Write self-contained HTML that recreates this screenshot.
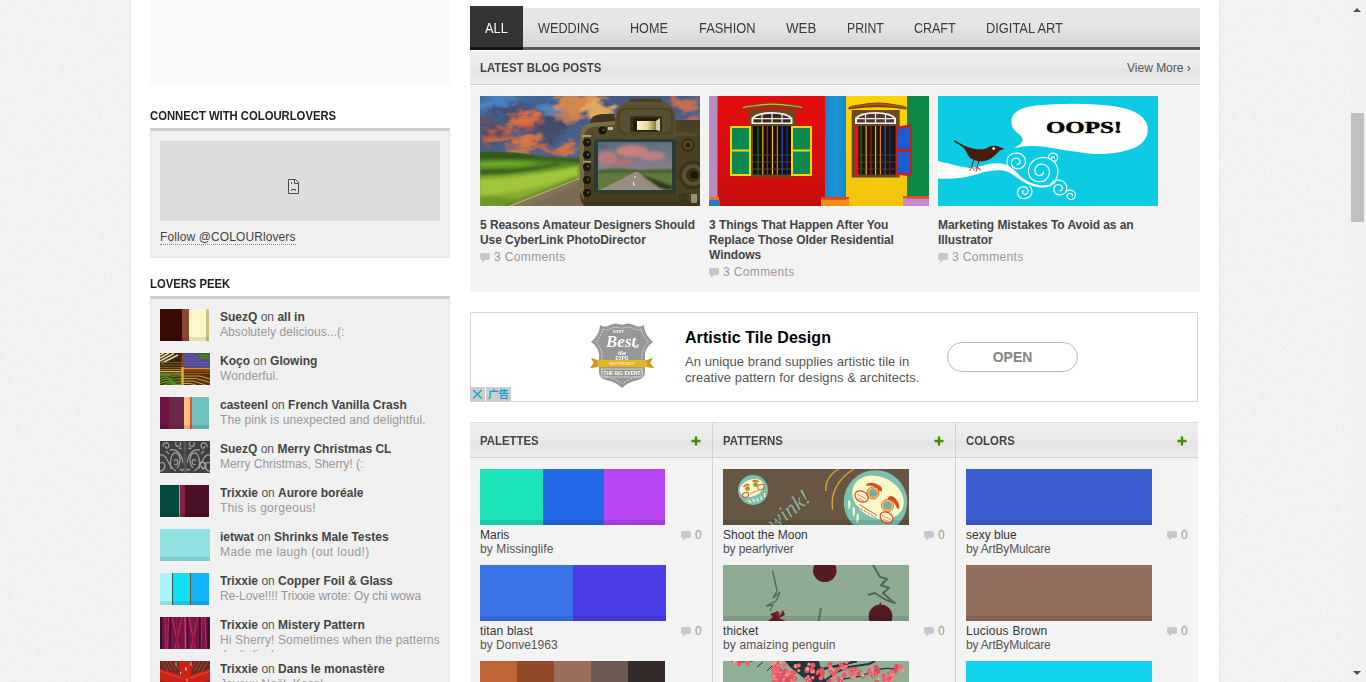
<!DOCTYPE html>
<html><head><meta charset="utf-8"><title>COLOURlovers</title>
<style>
*{box-sizing:border-box;margin:0;padding:0}
html,body{width:1366px;height:682px;overflow:hidden}
body{background:#eeeeee;font-family:"Liberation Sans","Noto Sans CJK SC",sans-serif;font-size:12px;color:#333;position:relative}
.abs{position:absolute}
#wrap{position:absolute;left:130px;top:0;width:1090px;height:682px;background:#fff;border-left:1px solid #ebebeb;border-right:1px solid #ebebeb}
h3{position:absolute;transform-origin:0 50%;transform:scaleX(.94);font-size:12px;font-weight:bold;color:#222;white-space:nowrap;line-height:14px}
.box{position:absolute;background:#f0f0f0;border:1px solid #e6e6e6;border-top:3px solid #cbcbcb}
/* tabs */
#tabs{position:absolute;left:470px;top:8px;width:730px;height:42px;background:linear-gradient(#e7e7e7,#e5e5e5 45%,#d5d5d5);border-bottom:3px solid #5a5a5a}
#tabs span{position:absolute;transform-origin:0 50%;top:0;height:39px;line-height:40px;font-size:14px;color:#3a3a3a;white-space:nowrap}
#taball span{display:inline-block;transform:scaleX(.91)}
#taball{position:absolute;left:470px;top:6px;width:53px;height:44px;background:#333;color:#fff;font-size:14px;line-height:44px;text-align:center;border-bottom:3px solid #141414}
.hd{position:absolute;height:34px;background:linear-gradient(#efefef,#e9e9e9 50%,#e3e3e3 55%,#ededed);border-bottom:1px solid #d4d4d4;font-weight:bold;font-size:12px;color:#444;line-height:35px;padding-left:10px}
.hd span{display:inline-block;transform-origin:0 50%;transform:scaleX(.95)}
.pt{position:absolute;letter-spacing:-.06px;font-weight:bold;font-size:12px;line-height:15px;color:#444;white-space:nowrap}
.cm{position:absolute;font-size:12px;color:#999;white-space:nowrap;line-height:14px}
.bub{position:absolute;width:10px;height:7px;background:#c8c8c8;border-radius:2px}
.bub:after{content:"";position:absolute;left:2px;top:6px;border-left:4px solid #c8c8c8;border-bottom:4px solid transparent}
.sw{position:absolute;height:56px;width:186px;overflow:hidden}
.sw i{position:absolute;top:0;height:56px;display:block}
.sw:after{content:"";position:absolute;left:0;right:0;bottom:0;height:5px;background:rgba(0,0,0,.1)}
.nm{position:absolute;font-size:12px;line-height:14px;color:#333;white-space:nowrap}
.by{position:absolute;font-size:12px;line-height:14px;color:#555;white-space:nowrap}
.lp{position:absolute;left:220px;font-size:12px;line-height:15px;white-space:nowrap;color:#999}
.lp b{color:#444}.lp em{font-style:normal;color:#555}
.th{position:absolute;left:160px;width:50px;height:32px;overflow:hidden}
.th i{position:absolute;top:0;height:32px;display:block}
.th[id]:after{display:none}
.th:after{content:"";position:absolute;left:0;right:0;bottom:0;height:4px;background:rgba(0,0,0,.1)}
.plus{position:absolute;color:#3a8a00;font-weight:bold;font-size:15px;line-height:15px}
</style></head><body>
<svg class="abs" style="left:0;top:0" width="1366" height="682"><defs><filter id="nz" x="0" y="0" width="100%" height="100%"><feTurbulence type="fractalNoise" baseFrequency="0.55" numOctaves="2" seed="3"/><feColorMatrix type="matrix" values="0 0 0 0 1  0 0 0 0 1  0 0 0 0 1  0.9 0 0 0 -0.25"/></filter></defs><rect width="1366" height="682" filter="url(#nz)"/></svg>
<div id="wrap"></div>

<!-- left column -->
<div class="abs" style="left:150px;top:0;width:300px;height:85px;background:#fafafa"></div>
<h3 style="left:150px;top:109px">CONNECT WITH COLOURLOVERS</h3>
<div class="box" style="left:150px;top:128px;width:300px;height:130px"></div>
<div class="abs" style="left:160px;top:141px;width:280px;height:80px;background:#ddd"></div>
<div class="abs" id="brk" style="left:287px;top:178px;width:14px;height:18px"><svg width="14" height="18" viewBox="0 0 14 18" style="display:block">
<path d="M1.5 1.5 H8.5 L11.5 4.5 V15.5 H1.5Z" fill="#e4e4e4" stroke="#4a4a4a" stroke-width="1"/>
<path d="M7.5 1.5 V5.5 H11.5" fill="none" stroke="#4a4a4a" stroke-width="1"/>
<path d="M4.5 4 V6" stroke="#555" stroke-width="1"/>
<path d="M4.2 12.6 Q6.5 10 9 12.6" fill="none" stroke="#444" stroke-width="1.1"/>
</svg></div><!--/brk-->
<div class="abs" style="left:160px;top:230px;font-size:12px;line-height:14px;letter-spacing:.1px;color:#444;border-bottom:1px dotted #888;white-space:nowrap">Follow @COLOURlovers</div>
<h3 style="left:150px;top:277px">LOVERS PEEK</h3>
<div class="box" style="left:150px;top:296px;width:300px;height:400px"></div>
<div id="peek">
<div class="th" style="top:309px;width:49px"><i style="left:0px;width:22px;background:#3a0c04"></i><i style="left:22px;width:7px;background:#8a4b32"></i><i style="left:29px;width:17px;background:#fff6cc"></i><i style="left:46px;width:3px;background:#d4c084"></i></div>
<div class="lp" style="top:310px;height:30px;overflow:hidden"><b>SuezQ</b> <em>on</em> <b>all in</b><br><span style="letter-spacing:0.07px">Absolutely delicious...(:</span></div>
<div class="th" id="p2" style="top:353px"><svg width="50" height="32" viewBox="0 0 50 32" style="display:block">
<defs><filter id="g05"><feGaussianBlur stdDeviation="0.45"/></filter><clipPath id="gc"><rect width="50" height="32"/></clipPath></defs>
<rect width="50" height="32" fill="#2a1a08"/>
<g filter="url(#g05)" clip-path="url(#gc)">
<rect x="0" y="0" width="23" height="16" fill="#3a2810"/>
<rect x="23" y="0" width="27" height="15" fill="#4e4a8a"/>
<rect x="0" y="16" width="23" height="16" fill="#4a3410"/>
<rect x="23" y="15" width="27" height="17" fill="#5a2c0c"/>
<path d="M36 0 H50 V8 Q42 6 36 0Z" fill="#3f6a2a"/>
<path d="M23 2 H36 M23 4.5 H38 M23 7 H42 M23 9.5 H50 M23 12 H50" stroke="#6a5ab0" stroke-width="1"/>
<path d="M38 2 Q44 2 50 4 M40 4.5 Q46 5 50 6.5" stroke="#5a8a38" stroke-width=".9" fill="none"/>
<path d="M0 2 L4 0 M0 5 L9 0 M0 8 L14 0.5 M2 10 L18 2" stroke="#e4d4a4" stroke-width="1.5"/>
<path d="M0 9.5 H22 M0 12 H22 M0 14.5 H22" stroke="#7a5c24" stroke-width="1"/>
<path d="M0 16.5 H22" stroke="#a8781a" stroke-width="1.2"/>
<path d="M0 18.6 H22" stroke="#e8c424" stroke-width="1.1"/>
<path d="M0 21 H22" stroke="#b89a50" stroke-width="1"/>
<path d="M0 23 Q4 21 8 22.5 T22 22.5 M0 25.5 Q5 22.5 9 25 T22 25 M0 28 Q6 24.5 11 27.5 T22 27.5 M0 30.5 Q7 27 13 30 T22 30 M4 32 Q9 29.5 15 32" stroke="#58a028" stroke-width="1.1" fill="none"/>
<path d="M23 15.6 H50" stroke="#e8921c" stroke-width="1.4"/>
<path d="M23 18 H50 M23 20.5 H50" stroke="#a05818" stroke-width="1"/>
<path d="M23 23 H40 L50 26 M23 25.5 H36 L50 29.5 M23 28 H33 L46 32 M23 30.5 H30 L36 32" stroke="#b8a840" stroke-width="1" fill="none"/>
<rect x="21.6" y="0" width="1.8" height="14" fill="#8a4a14"/>
<rect x="21.2" y="14" width="2.6" height="18" fill="#e0a828"/>
</g>
</svg></div><!--/p2-->
<div class="lp" style="top:354px;height:30px;overflow:hidden"><b>Koço</b> <em>on</em> <b>Glowing</b><br><span style="letter-spacing:0.08px">Wonderful.</span></div>
<div class="th" style="top:397px;width:49px"><i style="left:0px;width:9px;background:#6d1444"></i><i style="left:9px;width:15px;background:#6b2a4a"></i><i style="left:24px;width:6px;background:#f8c27c"></i><i style="left:30px;width:2px;background:#e0523c"></i><i style="left:32px;width:17px;background:#72c0c0"></i></div>
<div class="lp" style="top:398px;height:30px;overflow:hidden"><b>casteenl</b> <em>on</em> <b>French Vanilla Crash</b><br><span style="letter-spacing:0.11px">The pink is unexpected and delightful.</span></div>
<div class="th" id="p4" style="top:441px"><svg width="50" height="32" viewBox="0 0 50 32" style="display:block">
<defs><filter id="h05"><feGaussianBlur stdDeviation="0.5"/></filter><clipPath id="hc"><rect width="50" height="32"/></clipPath>
<g id="hh" fill="none" stroke="#9a9a9a" stroke-width="1.3">
<path d="M3 6 Q3 1 7.5 2 Q10 4 8 7 Q5.5 8 5.5 5"/>
<path d="M16 1 Q14.5 5 18.5 5.5 Q22 4 20 1"/>
<path d="M10 9 Q15 8 18 11 Q22 15 23 22"/>
<path d="M11 28 Q9 16 14 12 Q19 11 20 18 Q20 24 17 27"/>
<path d="M0 14 Q4 13 6 17 L10 24 Q12 28 16 30"/>
<path d="M0 22 Q4 20 5 25 Q4 30 0 30"/>
<path d="M14 20 Q17 17 18 21 Q17 25 14.5 23"/>
<path d="M19 8 Q20 6 21.5 8 M6 10 L9 13 M20 28 Q22 30 24 28"/>
<path d="M24.5 0 V32" stroke="#555" stroke-width="1.5"/>
</g></defs>
<rect width="50" height="32" fill="#404040"/>
<g filter="url(#h05)" clip-path="url(#hc)">
<use href="#hh"/><use href="#hh" transform="translate(50,0) scale(-1,1)"/>
<path d="M40 26 Q38 21 43 21 Q47 23 45 27 Q42 29 41.5 25" fill="none" stroke="#a4a4a4" stroke-width="1.6"/>
</g>
</svg></div><!--/p4-->
<div class="lp" style="top:442px;height:30px;overflow:hidden"><b>SuezQ</b> <em>on</em> <b>Merry Christmas CL</b><br><span style="letter-spacing:-0.03px">Merry Christmas, Sherry! (:</span></div>
<div class="th" style="top:485px;width:49px"><i style="left:0px;width:19px;background:#054a42"></i><i style="left:19px;width:1px;background:#b89aa0"></i><i style="left:20px;width:5px;background:#8a2048"></i><i style="left:25px;width:24px;background:#4a1028"></i></div>
<div class="lp" style="top:486px;height:30px;overflow:hidden"><b>Trixxie</b> <em>on</em> <b>Aurore boréale</b><br><span style="letter-spacing:0.27px">This is gorgeous!</span></div>
<div class="th" style="top:529px;width:50px"><i style="left:0px;width:50px;background:#92e1e2"></i></div>
<div class="lp" style="top:530px;height:30px;overflow:hidden"><b>ietwat</b> <em>on</em> <b>Shrinks Male Testes</b><br><span style="letter-spacing:0.38px">Made me laugh (out loud!)</span></div>
<div class="th" style="top:573px;width:49px"><i style="left:0px;width:12px;background:#a8f5fc"></i><i style="left:12px;width:1px;background:#2a5a5a"></i><i style="left:13px;width:17px;background:#12e0f5"></i><i style="left:30px;width:1px;background:#7a5a3a"></i><i style="left:31px;width:18px;background:#12b4fa"></i></div>
<div class="lp" style="top:574px;height:30px;overflow:hidden"><b>Trixxie</b> <em>on</em> <b>Copper Foil &amp; Glass</b><br><span style="letter-spacing:-0.08px">Re-Love!!!! Trixxie wrote: Oy chi wowa</span></div>
<div class="th" id="p8" style="top:617px"><svg width="50" height="32" viewBox="0 0 50 32" style="display:block">
<defs><filter id="i05"><feGaussianBlur stdDeviation="0.55"/></filter><clipPath id="ic"><rect width="50" height="32"/></clipPath></defs>
<rect width="50" height="32" fill="#761646"/>
<g filter="url(#i05)" clip-path="url(#ic)" fill="none" stroke-width="1.1">
<path d="M1 0 V32 M48.5 0 V32" stroke="#3c0a34" stroke-width="2.5"/>
<path d="M5 0 L6 32 M8.5 0 L7.5 32" stroke="#c42458"/>
<path d="M12 0 L19 32 M22 0 L15 32" stroke="#d02c5c"/>
<path d="M25 0 L25.5 32" stroke="#e03a60" stroke-width="1.3"/>
<path d="M29 0 L35 32 M38 0 L31 32" stroke="#cc2a5a"/>
<path d="M42 0 L41 32 M45 0 L46 32" stroke="#c42458"/>
<path d="M10.5 0 L10 32 M27.5 0 L28 32 M39.5 0 L40 32" stroke="#3a0a38" stroke-width="1.6"/>
<path d="M17 0 L17 32 M33.5 0 V32" stroke="#8a1848" stroke-width="1.5"/>
</g>
</svg></div><!--/p8-->
<div class="lp" style="top:618px;height:34px;overflow:hidden"><b>Trixxie</b> <em>on</em> <b>Mistery Pattern</b><br><span style="letter-spacing:0.12px">Hi Sherry! Sometimes when the patterns</span><br>don't display</div>
<div class="th" id="p9" style="top:661px"><svg width="50" height="32" viewBox="0 0 50 32" style="display:block">
<defs><filter id="j05"><feGaussianBlur stdDeviation="0.5"/></filter><clipPath id="jc"><rect width="50" height="32"/></clipPath></defs>
<rect width="50" height="32" fill="#6e2a20"/>
<g filter="url(#j05)" clip-path="url(#jc)">
<path d="M2 0 L8 10 M6 0 L12 10 M10 0 L16 10 M14 0 L19 9 M48 0 L42 10 M44 0 L38 10 M40 0 L34 10 M36 0 L31 9" stroke="#a04a3a" stroke-width=".9"/>
<path d="M19 0 H32 L31 14 L50 8 V20 L30 22 V32 H21 V22 L0 20 V8 L20 14Z" fill="#cc2418"/>
<path d="M0 22 L18 24 L6 32 H0Z M50 22 L32 24 L44 32 H50Z" fill="#5e1c14"/>
<path d="M0 10 L21 17 M50 10 L30 17" stroke="#e84030" stroke-width="1.3"/>
<ellipse cx="26" cy="8" rx=".9" ry="1.8" fill="#f0d0c8"/><ellipse cx="20.5" cy="12" rx=".7" ry="1.2" fill="#e8b0a0"/><ellipse cx="16" cy="3" rx=".6" ry="2" fill="#d8a8a0"/><ellipse cx="31" cy="3" rx=".6" ry="2" fill="#d8a8a0"/><ellipse cx="27" cy="19" rx=".7" ry="1.2" fill="#f0c0b0"/>
</g>
</svg></div><!--/p9-->
<div class="lp" style="top:662px;height:30px;overflow:hidden"><b>Trixxie</b> <em>on</em> <b>Dans le monastère</b><br>Joyeux Noël, Koço!</div>
</div>

<!-- right column -->
<div id="tabs">
<span style="left:68.0px;transform:scaleX(0.906)">WEDDING</span><span style="left:159.7px;transform:scaleX(0.900)">HOME</span><span style="left:228.8px;transform:scaleX(0.921)">FASHION</span><span style="left:315.7px;transform:scaleX(0.953)">WEB</span><span style="left:376.7px;transform:scaleX(0.876)">PRINT</span><span style="left:443.9px;transform:scaleX(0.891)">CRAFT</span><span style="left:515.5px;transform:scaleX(0.919)">DIGITAL ART</span>
</div>
<div id="taball"><span>ALL</span></div>

<div class="hd" style="left:470px;top:51px;width:730px"><span>LATEST BLOG POSTS</span></div>
<div class="abs" style="left:1127px;top:61px;font-size:12px;color:#555;white-space:nowrap">View More ›</div>
<div class="abs" style="left:470px;top:86px;width:730px;height:206px;background:#f3f3f3"></div>

<div class="abs" id="img1" style="left:480px;top:96px;width:220px;height:110px;background:#6a8a3a"><svg width="220" height="110" viewBox="0 0 220 110" style="display:block">
<defs>
<filter id="b3" x="-10%" y="-10%" width="120%" height="120%"><feGaussianBlur stdDeviation="2.2" result="g"/><feTurbulence type="fractalNoise" baseFrequency="0.06 0.11" numOctaves="3" seed="7" result="t"/><feDisplacementMap in="g" in2="t" scale="22" xChannelSelector="R" yChannelSelector="G"/><feGaussianBlur stdDeviation="0.7"/></filter>
<filter id="b2" x="-30%" y="-30%" width="160%" height="160%"><feGaussianBlur stdDeviation="1.8"/></filter>
<filter id="b1" x="-30%" y="-30%" width="160%" height="160%"><feGaussianBlur stdDeviation="0.8"/></filter>
<filter id="b05" x="-10%" y="-10%" width="120%" height="120%"><feGaussianBlur stdDeviation="0.45"/></filter>
<linearGradient id="sky" x1="0" y1="0" x2="1" y2="1"><stop offset="0" stop-color="#3d70ad"/><stop offset=".3" stop-color="#46587e"/><stop offset=".65" stop-color="#4a6590"/><stop offset="1" stop-color="#56749a"/></linearGradient>
<linearGradient id="grass" x1="0" y1="0" x2="0" y2="1"><stop offset="0" stop-color="#385a1c"/><stop offset=".25" stop-color="#5a8826"/><stop offset=".6" stop-color="#88b232"/><stop offset="1" stop-color="#86a632"/></linearGradient>
<linearGradient id="cam" x1="0" y1="0" x2="0" y2="1"><stop offset="0" stop-color="#5e5232"/><stop offset=".5" stop-color="#52472a"/><stop offset="1" stop-color="#443a20"/></linearGradient>
<linearGradient id="lcdsky" x1="0" y1="0" x2="0" y2="1"><stop offset="0" stop-color="#5e6c80"/><stop offset="1" stop-color="#8a8290"/></linearGradient>
<linearGradient id="glass" x1="0" y1="0" x2="1" y2="0"><stop offset="0" stop-color="#fbf6d4"/><stop offset=".55" stop-color="#e9d99a"/><stop offset="1" stop-color="#8d7a3c"/></linearGradient>
<clipPath id="c1"><rect width="220" height="110"/></clipPath>
<clipPath id="lcd"><rect x="118" y="46" width="74" height="48"/></clipPath>
</defs>
<g clip-path="url(#c1)">
<rect width="220" height="64" fill="url(#sky)"/>
<g filter="url(#b3)" opacity=".9">
<ellipse cx="20" cy="8" rx="22" ry="8" fill="#4f86c4"/>
<ellipse cx="70" cy="14" rx="12" ry="7" fill="#5a86bc"/>
<ellipse cx="45" cy="30" rx="30" ry="6" fill="#47507a"/>
<ellipse cx="85" cy="38" rx="18" ry="8" fill="#4a5f8a"/>
<ellipse cx="30" cy="14" rx="22" ry="5" fill="#454c6c"/><ellipse cx="70" cy="30" rx="22" ry="7" fill="#424a68"/><ellipse cx="14" cy="33" rx="14" ry="4" fill="#5a4658"/><ellipse cx="60" cy="42" rx="20" ry="4" fill="#4a4a66"/>
<ellipse cx="100" cy="8" rx="26" ry="10" fill="#e38c48"/>
<ellipse cx="118" cy="14" rx="16" ry="9" fill="#f0b25c"/>
<ellipse cx="88" cy="20" rx="12" ry="5" fill="#c9805a"/>
<ellipse cx="44" cy="25" rx="17" ry="9" fill="#b85a44"/><ellipse cx="44" cy="23" rx="14" ry="6.5" fill="#e8743c"/>
<ellipse cx="30" cy="30" rx="9" ry="4" fill="#d8683a"/>
<ellipse cx="20" cy="42" rx="17" ry="5.5" fill="#d2663c"/>
<ellipse cx="46" cy="46" rx="14" ry="5" fill="#ea7a3c"/>
<ellipse cx="38" cy="56" rx="16" ry="3.4" fill="#e8804a"/>
<ellipse cx="66" cy="53" rx="14" ry="4" fill="#d8683a"/>
<ellipse cx="86" cy="55" rx="12" ry="4.5" fill="#e6763a"/>
<ellipse cx="6" cy="24" rx="6" ry="5" fill="#6a4a5a"/>
<ellipse cx="205" cy="8" rx="14" ry="5" fill="#d8704a"/>
<ellipse cx="215" cy="24" rx="8" ry="3" fill="#e0704a"/>
<ellipse cx="200" cy="18" rx="10" ry="4" fill="#4a5a80"/>
</g>
<path d="M0 56 Q30 55 55 59 T100 62 L100 110 L0 110Z" fill="url(#grass)"/>
<g filter="url(#b2)">
<path d="M0 58 Q30 56 60 61 L100 63 L100 66 Q50 62 0 62Z" fill="#2f561a"/>
<path d="M0 73 Q30 74 62 70 Q72 68 78 66 L80 68 Q60 76 0 79Z" fill="#35601a"/>
<path d="M0 66 Q30 64 60 66 L40 70 0 71Z" fill="#6aa828"/>
<path d="M0 84 Q50 80 98 70 L98 80 Q50 95 0 100Z" fill="#a0c63a"/>
<path d="M0 100 Q20 100 40 104 L30 110 L0 110Z" fill="#6a9a26"/>
</g>
<path d="M28 110 L100 82 L104 82 L104 110Z" fill="#85745a"/>
<path d="M48 110 L104 86 L104 110Z" fill="#7a6a52" filter="url(#b1)"/>
<path d="M30 110 L99 82.5" stroke="#d8cdb0" stroke-width="1" filter="url(#b05)"/>
<path d="M24 110 L97 82" stroke="#5a7a22" stroke-width="1.6" filter="url(#b1)"/>
<!-- camera -->
<g filter="url(#b05)">
<path d="M110 27 Q110 19 122 18 L134 18 L136 26Z" fill="#3c341e"/>
<path d="M148 6 L150 2.5 L181 2.5 L183 6Z" fill="#4a4028"/>
<path d="M100 40 Q100 30 110 27 L135 25 Q137 8 146 6 L184 6 Q194 8 196 24 L220 24 L220 110 L104 110 Q100 106 100 96Z" fill="url(#cam)"/>
<path d="M100 40 Q100 30 110 27 L135 25 L135 29 L112 31 Q104 33 104 42 L104 104 L100 96Z" fill="#7a6c46"/>
<path d="M196 24 L220 24 L220 40 Q206 34 196 36Z" fill="#4a4026"/>
<rect x="137" y="12" width="57" height="27" rx="7" fill="#4e4428"/>
<rect x="140" y="14" width="51" height="22" rx="6" fill="#5a4f32"/>
<rect x="150" y="20" width="32" height="16" rx="2" fill="#3a3018"/>
<rect x="153" y="22" width="27" height="13" rx="1" fill="#221c0e"/>
<rect x="157" y="25" width="19" height="9" fill="url(#glass)"/>
<path d="M176 25 L180 22 L180 35 L176 34Z" fill="#d9cfa8"/>
<rect x="114" y="43" width="82" height="54" rx="3" fill="#2c3a38"/>
<rect x="196" y="40" width="24" height="70" fill="#4a4026"/>
</g>
<g clip-path="url(#lcd)">
<rect x="118" y="46" width="74" height="30" fill="url(#lcdsky)"/>
<g filter="url(#b2)">
<ellipse cx="152" cy="55" rx="16" ry="6" fill="#c8807a"/><ellipse cx="140" cy="66" rx="14" ry="4" fill="#a87478"/>
<ellipse cx="127" cy="62" rx="10" ry="7" fill="#b87a78"/>
<ellipse cx="172" cy="60" rx="13" ry="5" fill="#b88080"/>
<ellipse cx="185" cy="52" rx="7" ry="4" fill="#6a7488"/>
<ellipse cx="122" cy="50" rx="6" ry="3" fill="#566478"/>
</g>
<rect x="118" y="74" width="74" height="20" fill="#5f7a3c"/>
<path d="M118 74 Q140 71 160 74 L192 73 L192 77 L118 77Z" fill="#4a6430" filter="url(#b1)"/>
<path d="M120 94 L155 76 L158 76 L185 94Z" fill="#9a8c82"/>
<path d="M160 78 L192 90 L192 94 L180 92Z" fill="#2e3a22" filter="url(#b1)"/>
<path d="M153.5 86 L154 90 M155 80 L155.2 82" stroke="#fff" stroke-width="1"/>
</g>
<g filter="url(#b05)">
<g fill="#17130a"><circle cx="107" cy="46.5" r="4"/><circle cx="107" cy="59" r="4"/><circle cx="107" cy="71" r="4"/><circle cx="107" cy="84" r="4"/><circle cx="107" cy="97" r="4"/><circle cx="122.5" cy="34.5" r="4"/></g>
<g fill="#5a5038"><circle cx="108" cy="46" r="1.3"/><circle cx="108" cy="58.5" r="1.3"/><circle cx="108" cy="70.5" r="1.3"/><circle cx="108" cy="83.5" r="1.3"/><circle cx="108" cy="96.5" r="1.3"/><circle cx="123.5" cy="34" r="1.3"/></g>
<circle cx="208" cy="49" r="7" fill="#3a3018"/><circle cx="208" cy="49" r="4.6" fill="#5a4e2e"/><circle cx="208" cy="49" r="2.6" fill="#2a2210"/>
<circle cx="213" cy="79" r="14.5" fill="#3c321a"/><circle cx="213" cy="79" r="11" fill="#5c5030" /><circle cx="213" cy="79" r="7" fill="#3a3018"/><circle cx="214" cy="79" r="3.6" fill="#18140a"/>
<circle cx="203" cy="102" r="5" fill="#3e341c"/>
<rect x="104" y="105" width="116" height="5" fill="#3c321a"/>
<rect x="128" y="31" width="5" height="3" fill="#c8c0a0"/>
<rect x="102" y="39" width="9" height="2" fill="#a89c78"/>
<rect x="103" y="65" width="8" height="1.6" fill="#a89c78"/>
<rect x="211" y="98" width="6" height="9" fill="#b8b098" opacity=".7"/>
</g>
</g>
</svg></div><!--/img1-->
<div class="abs" id="img2" style="left:709px;top:96px;width:220px;height:110px;background:#d11"><svg width="220" height="110" viewBox="0 0 220 110" style="display:block">
<defs>
<filter id="s05" x="-5%" y="-5%" width="110%" height="110%"><feGaussianBlur stdDeviation="0.4"/></filter>
<linearGradient id="rw" x1="0" y1="0" x2="0" y2="1"><stop offset="0" stop-color="#e40c0a"/><stop offset=".6" stop-color="#da0b0a"/><stop offset="1" stop-color="#c40a0c"/></linearGradient>
<linearGradient id="yw" x1="0" y1="0" x2="0" y2="1"><stop offset="0" stop-color="#fbd406"/><stop offset="1" stop-color="#f2c408"/></linearGradient>
<linearGradient id="bp" x1="0" y1="0" x2="1" y2="0"><stop offset="0" stop-color="#1787c8"/><stop offset=".5" stop-color="#1d95d6"/><stop offset="1" stop-color="#168acb"/></linearGradient>
</defs>
<g filter="url(#s05)">
<rect width="220" height="110" fill="url(#rw)"/>
<rect x="0" y="0" width="8.5" height="110" fill="#b98cc2"/>
<rect x="0" y="101" width="10" height="3" fill="#e8781a"/><rect x="0" y="104" width="11" height="6" fill="#2a78c8"/>
<rect x="137" y="0" width="61" height="110" fill="url(#yw)"/>
<rect x="116" y="0" width="21" height="102" fill="url(#bp)"/>
<rect x="112" y="101" width="28" height="2.5" fill="#e8401a"/><rect x="112" y="103.5" width="28" height="6.5" fill="#f28c14"/>
<rect x="198" y="0" width="22" height="101" fill="#0b8849"/>
<rect x="194" y="100" width="26" height="2.5" fill="#e8501a"/><rect x="194" y="102.5" width="26" height="7.5" fill="#c48acc"/>
<!-- window 1 -->
<path d="M32 12 Q34 9 44 8.5 Q64 4.5 84 8.5 Q93 9 95 12 L94 13.5 Q64 9 33 13.5Z" fill="#6e4a20"/>
<path d="M34 11.5 Q40 10 46 9.8 Q64 6.5 82 9.8 Q88 10 93 11.5" stroke="#e8b820" stroke-width="1.1" fill="none"/>
<rect x="39.5" y="13.5" width="46.5" height="67.5" fill="#6b4a22"/>
<path d="M42.5 28 L42.5 22 Q48 16 63 16 Q78 16 83.5 22 L83.5 28Z" fill="#f4f0e8"/>
<path d="M44.5 26.5 L44.5 22.8 Q50 17.8 63 17.8 Q76 17.8 81.5 22.8 L81.5 26.5Z" fill="#3a2c22"/>
<path d="M53 17 V27.5 M63 16.5 V27.5 M73 17 V27.5 M43 22.6 H83" stroke="#f4f0e8" stroke-width="1.2"/>
<rect x="44" y="30" width="38.5" height="48.5" fill="#160e08"/>
<g stroke-width="1.1"><path d="M49 30V78.5" stroke="#0c7a40"/><path d="M53.8 30V78.5" stroke="#e8c818"/><path d="M58.3 30V78.5" stroke="#d81c14"/><path d="M63.5 30V78.5" stroke="#f0d020"/><path d="M68.3 30V78.5" stroke="#e8861a"/><path d="M73.2 30V78.5" stroke="#1f5fd0"/><path d="M78 30V78.5" stroke="#28308a"/></g>
<path d="M44 59H82.5 M44 66H82.5 M44 73H82.5" stroke="#7a5a30" stroke-width=".8" opacity=".8"/>
<rect x="21" y="30" width="21" height="50" fill="#f0d80a"/><rect x="23" y="32" width="17" height="21.5" fill="#0b8850"/><rect x="23" y="55.5" width="17" height="22.5" fill="#0b8850"/>
<rect x="82" y="30" width="21" height="50" fill="#f0d80a"/><rect x="84" y="32" width="17" height="21.5" fill="#0b8850"/><rect x="84" y="55.5" width="17" height="22.5" fill="#0b8850"/>
<!-- window 2 -->
<path d="M139 12 Q141 9 151 8.5 Q169 4.5 187 8.5 Q196 9 198 12 L197 13.5 Q169 9 140 13.5Z" fill="#6e4a20"/>
<path d="M141 11.5 Q147 10 153 9.8 Q169 6.5 185 9.8 Q191 10 196 11.5" stroke="#d84a1a" stroke-width="1.1" fill="none"/>
<rect x="142.7" y="14" width="48" height="67.5" fill="#6b4a22"/>
<path d="M146 28 L146 22 Q151 16 166.5 16 Q182 16 187 22 L187 28Z" fill="#f4f0e8"/>
<path d="M148 26.5 L148 22.8 Q153 17.8 166.5 17.8 Q180 17.8 185 22.8 L185 26.5Z" fill="#4a3c30"/>
<path d="M156.5 17 V27.5 M166.5 16.5 V27.5 M176.5 17 V27.5 M146.5 22.6 H186.5" stroke="#f4f0e8" stroke-width="1.2"/>
<rect x="146.7" y="30" width="40" height="48.5" fill="#1c120a"/>
<rect x="145.5" y="30" width="4" height="50" fill="#d41c18"/>
<g stroke-width="1.1"><path d="M152 30V78.5" stroke="#0c7a40"/><path d="M157.2 30V78.5" stroke="#e8c818"/><path d="M162 30V78.5" stroke="#d81c14"/><path d="M166.6 30V78.5" stroke="#f0d020"/><path d="M171.4 30V78.5" stroke="#e8861a"/><path d="M176.1 30V78.5" stroke="#1f5fd0"/><path d="M181 30V78.5" stroke="#28308a"/></g>
<path d="M150 59H186 M150 66H186 M150 73H186" stroke="#7a5a30" stroke-width=".8" opacity=".7"/>
<path d="M186.7 31 L203 28 L203 80.5 L186.7 78.5Z" fill="#cc1c1c"/>
<path d="M188.7 33 L201 30.6 L201 53 L188.7 53.4Z M188.7 56 L201 55.6 L201 78 L188.7 76.4Z" fill="#1c5ad2"/>
</g>
</svg></div><!--/img2-->
<div class="abs" id="img3" style="left:938px;top:96px;width:220px;height:110px;background:#11cde4"><svg width="220" height="110" viewBox="0 0 220 110" style="display:block">
<defs><filter id="t05" x="-5%" y="-5%" width="110%" height="110%"><feGaussianBlur stdDeviation="0.35"/></filter></defs>
<rect width="220" height="110" fill="#0ccbe3"/>
<g filter="url(#t05)">
<path d="M75.8 52 Q84 48 84.6 44 Q84.5 40 79 36.5 Q72 31 73.6 23 Q76 12 98 9.5 Q130 6.5 165 9 Q205 12 209.5 30 Q212 48 190 54 Q172 59.5 150 57.5 Q125 54 108 51 Q92 48.5 75.8 52Z" fill="#fff"/>
<path d="M0 65.3 Q10 67 20 70 Q32 73.5 45 69.5 Q55 66.5 64 67.5 Q72 69 80 78 Q90 88 103 89.5 Q112 90 117 85 L118 86.2 Q112 92 102 91.5 Q90 90.5 78 81 Q70 74.5 62 74.3 Q52 74 40 78 Q20 84 0 82.6Z" fill="#fff"/>
<g fill="none" stroke="#fff" stroke-width="1.15">
<path d="M80 78 Q72 76 69.5 69 Q67.5 60 75 57.5 Q84 55.5 87 62.5 Q89 70 82 72.5 Q75 74 73.5 68 Q73 62.5 78 62 Q82.5 62.5 82 66.5 Q81 69 78.5 68"/>
<path d="M117 85 Q122 77 118.5 69 Q114 61 104 61.5 Q93 62.5 90.5 73 Q89.5 83 98.5 85.5 Q108 87 111 79 Q113 71 106 68.5 Q99 67 97 73 Q96 78.5 101 79.5 Q105.5 79.5 105.5 75.5"/>
<path d="M112 64 Q109.5 61 111.5 58.5 Q114.5 56 118 58 Q121 61 118.5 64.5 Q115.5 66.5 113.5 64 Q112.8 61.5 115 60.8 Q117 61 116.5 62.8"/>
<path d="M92 90 Q96 96 92 100.5 Q87 104.5 82 101.5 Q78 98 80.5 93 Q84 89 88.5 91.5 Q91.5 94.5 89 97.5 Q86 99.5 84.5 96.5 Q84.5 94.5 86.5 94.5"/>
<path d="M112 90.5 Q113 84.5 119 84 Q126 84 128.5 89.5 Q130 96 124.5 98.5 Q118 100 116 95 Q115 90 119.5 88.5 Q124 88.5 124.5 92 Q124 95 121.5 94.5"/>
<path d="M127.5 96.5 Q128.5 94.2 132 94 Q136.5 94.5 137.5 98 Q137.5 102.5 133.5 103.5 Q129.5 103.5 129 100 Q129.5 97.2 132.5 97.2 Q135 98 134.2 100.2"/>
</g>
<path d="M16.1 43.9 Q18.5 45 21 46.8 Q25 49.5 29 50.8 Q34 52.8 38.7 53.2 Q44 53.6 48.4 52.4 Q51.5 49.8 55.6 49.7 Q59 49.6 61.3 50.8 L66.3 52.9 L61.3 54.8 Q59.5 57.5 56.5 59.7 Q53 63 48.4 64.5 Q44 65.8 40.3 65.3 Q35.5 64.5 32.3 62.1 Q29.5 59.5 28.2 55.6 Q26.5 52.5 24.2 50.8 Q21 48.5 17.7 46.8 Q16 45.5 16.1 43.9Z" fill="#4b1d0c"/>
<path d="M36 63 L33.5 71 M41 64.5 L39 71.5" stroke="#4b1d0c" stroke-width="1"/>
<path d="M31 72 L34 70.5 L36.5 74.5 M31.5 75 L34 71 M37 72.5 L39.5 71 L42.5 74 M38 75.5 L39.5 71.5" stroke="#b0665a" stroke-width="1.1" fill="none"/>
<circle cx="55.7" cy="52.6" r="1.4" fill="#fff"/>
</g>
<text x="108" y="36.8" font-family="'Liberation Serif',serif" font-weight="bold" font-size="17" textLength="76" lengthAdjust="spacingAndGlyphs" fill="#000" stroke="#000" stroke-width=".5">OOPS!</text>
</svg></div><!--/img3-->

<div class="pt" style="left:480px;top:218px">5 Reasons Amateur Designers Should<br>Use CyberLink PhotoDirector</div>
<div class="bub" style="left:480px;top:253px"></div><div class="cm" style="left:494px;top:250px;letter-spacing:.36px">3 Comments</div>
<div class="pt" style="left:709px;top:218px">3 Things That Happen After You<br>Replace Those Older Residential<br>Windows</div>
<div class="bub" style="left:709px;top:268px"></div><div class="cm" style="left:723px;top:265px;letter-spacing:.36px">3 Comments</div>
<div class="pt" style="left:938px;top:218px">Marketing Mistakes To Avoid as an<br>Illustrator</div>
<div class="bub" style="left:938px;top:253px"></div><div class="cm" style="left:952px;top:250px;letter-spacing:.36px">3 Comments</div>

<!-- ad -->
<div class="abs" style="left:470px;top:312px;width:728px;height:90px;border:1px solid #d6d6d6;background:#fff"></div>
<div class="abs" id="badge" style="left:588px;top:322px;width:68px;height:68px"><svg width="68" height="68" viewBox="0 0 68 68" style="display:block">
<defs><filter id="k05" x="-5%" y="-5%" width="110%" height="110%"><feGaussianBlur stdDeviation="0.35"/></filter></defs>
<g filter="url(#k05)">
<path d="M12 3 Q17 6 22 3 Q28 0 34 3 Q40 0 46 3 Q51 6 56 3 Q56 12 65 20 Q58 25 57 32 L57 50 Q57 56 50 58 Q40 60 34 66 Q28 60 18 58 Q11 56 11 50 L11 32 Q10 25 3 20 Q12 12 12 3Z" fill="#979797"/>
<path d="M15 7 Q19 9 23 6.5 Q28 4 34 6.5 Q40 4 45 6.5 Q49 9 53 7 Q54 13 60.5 20 Q55 25 54 32 L54 49 Q54 53.5 49 55 Q40 57 34 62 Q28 57 19 55 Q14 53.5 14 49 L14 32 Q13 25 7.5 20 Q14 13 15 7Z" fill="none" stroke="#e6e6e6" stroke-width=".8" stroke-dasharray="2.2 1.2"/>
<text x="18" y="25" font-family="'Liberation Serif',serif" font-style="italic" font-weight="bold" font-size="17" fill="#fff">Best</text>
<text x="46" y="26" font-family="'Liberation Sans',sans-serif" font-weight="bold" font-size="5" fill="#fff">of</text>
<text x="25" y="11" font-family="'Liberation Sans',sans-serif" font-weight="bold" font-size="3.6" fill="#fff">DON'T</text>
<text x="34" y="32.5" text-anchor="middle" font-family="'Liberation Sans',sans-serif" font-weight="bold" font-size="5.6" fill="#fff">tile</text>
<text x="34" y="37.5" text-anchor="middle" font-family="'Liberation Sans',sans-serif" font-weight="bold" font-size="4.6" fill="#fff">EXPO</text>
<path d="M3 36 L9 38 L59 38 L65 36 L62 41 L66 46 L59 45 L9 45 L2 46 L6 41Z" fill="#e6b422"/>
<path d="M3 36 L9 38 L9 45 L2 46 L6 41Z M65 36 L59 38 L59 45 L66 46 L62 41Z" fill="#c99a14"/>
<text x="34" y="43.4" text-anchor="middle" font-family="'Liberation Sans',sans-serif" font-weight="bold" font-size="3.6" fill="#f8e6a0" textLength="26">BEST PRODUCT</text>
<rect x="13.5" y="47" width="41" height="8" rx="2" fill="none" stroke="#e6e6e6" stroke-width=".7"/>
<text x="34" y="53.4" text-anchor="middle" font-family="'Liberation Sans',sans-serif" font-weight="bold" font-size="5.4" fill="#fff" textLength="37" lengthAdjust="spacingAndGlyphs">THE BIG EVENT</text>
</g>
</svg></div><!--/badge-->
<div class="abs" style="left:685px;top:328px;font-size:16px;font-weight:bold;color:#000;white-space:nowrap;line-height:20px;letter-spacing:.07px">Artistic Tile Design</div>
<div class="abs" style="left:685px;top:354px;font-size:13px;color:#555;white-space:nowrap;line-height:16.2px;letter-spacing:.06px">An unique brand supplies artistic tile in<br>creative pattern for designs &amp; architects.</div>
<div class="abs" style="left:947px;top:342px;width:131px;height:30px;border:1px solid #bbb;border-radius:15px;text-align:center;line-height:28px;font-size:14px;font-weight:bold;color:#858585">OPEN</div>
<div class="abs" style="left:470px;top:387px;width:15px;height:15px;background:#cdcdcd"><svg width="15" height="15" viewBox="0 0 15 15" style="display:block"><path d="M3.2 3 L11.6 11.6 M11.6 3 L3.2 11.6" stroke="#1aa3c2" stroke-width="1.5" fill="none"/></svg></div>
<div class="abs" style="left:486px;top:387px;width:25px;height:15px;background:#cdcdcd;color:#1aa3c2;font-size:10.5px;line-height:14px;font-weight:bold;text-align:center;white-space:nowrap">广告</div>

<!-- panels -->
<div class="abs" style="left:470px;top:422px;width:728px;height:270px;background:#f3f3f3;border-top:1px solid #ddd"></div>
<div class="hd" style="left:470px;top:423px;width:728px;height:35px"></div>
<div class="abs" style="left:712px;top:423px;width:1px;height:270px;background:#d0d0d0"></div>
<div class="abs" style="left:955px;top:423px;width:1px;height:270px;background:#d0d0d0"></div>
<div class="hd" style="left:470px;top:424px;width:242px;background:none;border:none"><span>PALETTES</span></div>
<div class="hd" style="left:713px;top:424px;width:242px;background:none;border:none"><span>PATTERNS</span></div>
<div class="hd" style="left:956px;top:424px;width:242px;background:none;border:none"><span>COLORS</span></div>
<svg class="abs" style="left:691px;top:436px" width="10" height="10" viewBox="0 0 10 10"><path d="M5 .5V9.5M.5 5H9.5" stroke="#3f8f00" stroke-width="2.4"/></svg><svg class="abs" style="left:934px;top:436px" width="10" height="10" viewBox="0 0 10 10"><path d="M5 .5V9.5M.5 5H9.5" stroke="#3f8f00" stroke-width="2.4"/></svg><svg class="abs" style="left:1177px;top:436px" width="10" height="10" viewBox="0 0 10 10"><path d="M5 .5V9.5M.5 5H9.5" stroke="#3f8f00" stroke-width="2.4"/></svg>

<div id="cols">
<div class="sw" style="left:480px;top:469px;width:185px"><i style="left:0px;width:63px;background:#1de4b8"></i><i style="left:63px;width:61px;background:#2369e8"></i><i style="left:124px;width:61px;background:#b846f2"></i></div>
<div class="nm" style="left:480px;top:528px">Maris</div><div class="by" style="left:480px;top:542px;letter-spacing:0.10px">by Missinglife</div>
<div class="bub" style="left:681px;top:531px"></div><div class="cm" style="left:695px;top:528px">0</div>
<div class="sw" style="left:480px;top:565px;width:186px"><i style="left:0px;width:93px;background:#3b73e8"></i><i style="left:93px;width:93px;background:#4a3fe6"></i></div>
<div class="nm" style="left:480px;top:624px;letter-spacing:0.15px">titan blast</div><div class="by" style="left:480px;top:638px;letter-spacing:0.02px">by Donve1963</div>
<div class="bub" style="left:681px;top:627px"></div><div class="cm" style="left:695px;top:624px">0</div>
<div class="sw" style="left:480px;top:661px;width:185px"><i style="left:0px;width:37px;background:#c26536"></i><i style="left:37px;width:37px;background:#914826"></i><i style="left:74px;width:37px;background:#9a705c"></i><i style="left:111px;width:37px;background:#6d5b52"></i><i style="left:148px;width:37px;background:#342c2b"></i></div>
<div class="sw" id="pt1" style="left:723px;top:469px;background:#675845"><svg width="186" height="56" viewBox="0 0 186 56" style="display:block">
<defs><filter id="p05" x="-5%" y="-5%" width="110%" height="110%"><feGaussianBlur stdDeviation="0.35"/></filter></defs>
<rect width="186" height="56" fill="#665643"/>
<g filter="url(#p05)">
<path d="M115.7 0 Q102 8 102.8 22" stroke="#d8a62e" stroke-width="1.4" fill="none"/>
<path d="M130.7 0 Q106 16 109.6 40.6" stroke="#d8a62e" stroke-width="1.4" fill="none"/>
<text transform="translate(51,62) rotate(-39)" font-family="'Liberation Serif',serif" font-style="italic" font-size="22" fill="#86b29c">wink!</text>
<circle cx="30" cy="21" r="15" fill="#7cc0b0"/>
<ellipse cx="28.6" cy="19" rx="12.5" ry="8.5" transform="rotate(-20 28.6 19)" fill="#fcf8c8"/>
<ellipse cx="22.5" cy="26" rx="3.2" ry="2.4" transform="rotate(-20 22.5 26)" fill="none" stroke="#d85a30" stroke-width="1"/>
<ellipse cx="38" cy="18" rx="3.4" ry="2.6" transform="rotate(-20 38 18)" fill="none" stroke="#d85a30" stroke-width="1"/>
<circle cx="24.5" cy="19.5" r="2.2" fill="#6aa850" stroke="#e8a030" stroke-width=".9"/>
<circle cx="32.5" cy="15.5" r="2.2" fill="#6aa850" stroke="#e8a030" stroke-width=".9"/>
<path d="M20.5 18 Q23 14.5 26 16 M29.5 12.5 Q32.5 10.5 35.5 13" stroke="#d85a30" stroke-width="1.5" fill="none"/>
<path d="M27 24.5 L36 21.5" stroke="#d85a30" stroke-width=".7"/>
<path d="M25 31 L28 33.5 M29.5 30 L32 33 M34 29 L35 32.5 M38 27.5 L38.5 31 M41.5 24 L41.5 28" stroke="#fcf8c8" stroke-width="1.3"/>
<circle cx="152.5" cy="33" r="31.8" fill="#7cc0b0"/>
<ellipse cx="155" cy="28.5" rx="27" ry="20.5" transform="rotate(27 155 28.5)" fill="#fcf8c8"/>
<ellipse cx="138.5" cy="27.5" rx="7" ry="5.2" transform="rotate(30 138.5 27.5)" fill="#fdf3c8" stroke="#d84a28" stroke-width="1.2"/>
<ellipse cx="163.5" cy="48.5" rx="6.8" ry="5.2" transform="rotate(30 163.5 48.5)" fill="#fdf3c8" stroke="#d84a28" stroke-width="1.2"/>
<path d="M134 25 L143 30 M135 29 L141 32" stroke="#d84a28" stroke-width=".6"/>
<path d="M159 46 L168 51 M160 50 L166 53" stroke="#d84a28" stroke-width=".6"/>
<circle cx="150" cy="24" r="4.3" fill="#6ab0b8" stroke="#e8a828" stroke-width="1.6"/><circle cx="150" cy="24" r="6" fill="none" stroke="#d84a28" stroke-width=".9"/>
<circle cx="164.5" cy="36.5" r="4.3" fill="#6ab0b8" stroke="#e8a828" stroke-width="1.6"/><circle cx="164.5" cy="36.5" r="6" fill="none" stroke="#d84a28" stroke-width=".9"/>
<path d="M143.5 15 Q149 12 155 16 Q159.5 17 159 22 Q156 23 154.5 19.5 Q149 15.5 143.5 17Z" fill="#d84a28"/>
<path d="M165 28.5 Q168 25.5 172 29 Q176 33 176.5 39 Q174 41 173 37 Q170 31 165 30.5Z" fill="#d84a28"/>
<path d="M136.5 35.5 L154 46.5" stroke="#4a3a2a" stroke-width=".7"/>
<path d="M134 37 L136 39.5 M137.5 39 L139.5 41.5 M141 41 L143 43.5 M144.5 43 L146.5 45.5 M148 45 L150 47.5 M151 47 L153 49.5" stroke="#d84a28" stroke-width=".8"/>
<path d="M125 33 Q127 28 127.5 35 Q127 42 125.5 40Z M129.5 39.5 Q131.5 35 132 42 Q131.5 49 130 47Z M133.5 46 Q136 42 136 49 Q135 55 133.5 53Z" fill="#fcf8c8"/>
</g>
</svg></div><!--/pt1-->
<div class="nm" style="left:723px;top:528px">Shoot the Moon</div><div class="by" style="left:723px;top:542px;letter-spacing:-0.09px">by pearlyriver</div>
<div class="bub" style="left:924px;top:531px"></div><div class="cm" style="left:938px;top:528px">0</div>
<div class="sw" id="pt2" style="left:723px;top:565px;background:#8fab92"><svg width="186" height="56" viewBox="0 0 186 56" style="display:block">
<defs><filter id="q05" x="-5%" y="-5%" width="110%" height="110%"><feGaussianBlur stdDeviation="0.35"/></filter></defs>
<rect width="186" height="56" fill="#8fab92"/>
<g filter="url(#q05)">
<circle cx="101.8" cy="5.3" r="11.8" fill="#571a20"/>
<circle cx="157.5" cy="51.4" r="11.9" fill="#571a20"/>
<path d="M157 40 L157.5 37.5" stroke="#571a20" stroke-width="1.2"/>
<path d="M49.5 6 Q52 16 54 26 L50 33 L57 27 L53 36 L43 41 L50 40 L47 46" stroke="#4a6a58" stroke-width="1.3" fill="none"/>
<path d="M150 0 L157 12 L164 14 L158 20 L166 23 L160 28 L169 36 L172 38 L163 35 L152 28 L145 30" stroke="#4a6a58" stroke-width="2" fill="none" stroke-linejoin="round"/>
<path d="M98 43 L95.5 56" stroke="#5a7a62" stroke-width="2.2"/>
<path d="M47 49 L55 46 L57 51 L60 45 L62 50 L56 53 L63 56 L45 56 L50 52Z" fill="#6a1c28"/>
<path d="M52 47 L57 52 M58 46 L55 53" stroke="#a83048" stroke-width=".7"/>
</g>
</svg></div><!--/pt2-->
<div class="nm" style="left:723px;top:624px;letter-spacing:0.10px">thicket</div><div class="by" style="left:723px;top:638px;letter-spacing:0.13px">by amaizing penguin</div>
<div class="bub" style="left:924px;top:627px"></div><div class="cm" style="left:938px;top:624px">0</div>
<div class="sw" id="pt3" style="left:723px;top:661px;background:#8fb095"><svg width="186" height="56" viewBox="0 0 186 56" style="display:block">
<defs><filter id="r05" x="-5%" y="-5%" width="110%" height="110%"><feGaussianBlur stdDeviation="0.3"/></filter></defs>
<rect width="186" height="56" fill="#8fb095"/>
<g filter="url(#r05)">
<path d="M62 0 Q66 6 72 10 Q80 16 86 22 L104 22 Q98 12 96 0Z" fill="#22343a"/>
<path d="M86 0 Q92 6 100 8 L118 4 L134 0" stroke="#22343a" stroke-width="2.5" fill="none"/>
<path d="M100 22 Q112 10 126 6 L146 3 L152 0" stroke="#22343a" stroke-width="2.2" fill="none"/>
<path d="M120 18 Q140 16 150 10 Q160 6 172 8" stroke="#22343a" stroke-width="1.3" fill="none"/>
<path d="M8 0 Q20 2 30 0 M34 6 L40 1 M44 10 L50 4" stroke="#22343a" stroke-width="1" fill="none"/>
<circle cx="52.8" cy="5.9" r="2.0" fill="#ee5a6a"/>
<circle cx="52.8" cy="5.9" r="0.6" fill="#fde0c0"/>
<circle cx="50.2" cy="13.9" r="1.9" fill="#e8485e"/>
<circle cx="50.2" cy="13.9" r="0.6" fill="#fde0c0"/>
<circle cx="56.4" cy="9.0" r="1.8" fill="#e8485e"/>
<circle cx="56.4" cy="9.0" r="0.6" fill="#fde0c0"/>
<circle cx="61.3" cy="4.5" r="2.2" fill="#f0707a"/>
<circle cx="52.3" cy="9.6" r="2.2" fill="#f0707a"/>
<circle cx="52.3" cy="9.6" r="0.6" fill="#fde0c0"/>
<circle cx="57.3" cy="16.1" r="2.1" fill="#ee5a6a"/>
<circle cx="57.3" cy="16.1" r="0.6" fill="#fde0c0"/>
<circle cx="53.4" cy="21.0" r="2.4" fill="#f28a88"/>
<circle cx="50.1" cy="9.3" r="2.3" fill="#f0707a"/>
<circle cx="56.1" cy="11.5" r="2.2" fill="#e8505e"/>
<circle cx="56.1" cy="11.5" r="0.6" fill="#fde0c0"/>
<circle cx="52.8" cy="8.7" r="2.4" fill="#e8485e"/>
<circle cx="52.8" cy="8.7" r="0.6" fill="#fde0c0"/>
<circle cx="57.5" cy="9.0" r="2.1" fill="#e8505e"/>
<circle cx="51.7" cy="16.1" r="1.7" fill="#ee5a6a"/>
<circle cx="55.3" cy="7.3" r="2.0" fill="#f28a88"/>
<circle cx="55.3" cy="7.3" r="0.6" fill="#fde0c0"/>
<circle cx="56.7" cy="20.3" r="1.7" fill="#e8485e"/>
<circle cx="53.3" cy="14.5" r="2.5" fill="#e8485e"/>
<circle cx="53.3" cy="14.5" r="0.6" fill="#fde0c0"/>
<circle cx="52.1" cy="12.3" r="1.6" fill="#e8485e"/>
<circle cx="61.5" cy="17.2" r="2.6" fill="#e8485e"/>
<circle cx="61.5" cy="17.2" r="0.6" fill="#fde0c0"/>
<circle cx="53.9" cy="6.8" r="2.3" fill="#f28a88"/>
<circle cx="50.9" cy="15.1" r="2.5" fill="#f0707a"/>
<circle cx="50.9" cy="15.1" r="0.6" fill="#fde0c0"/>
<circle cx="54.6" cy="21.3" r="1.9" fill="#e8485e"/>
<circle cx="54.6" cy="21.3" r="0.6" fill="#fde0c0"/>
<circle cx="55.5" cy="10.6" r="2.4" fill="#f0707a"/>
<circle cx="55.3" cy="7.7" r="2.5" fill="#e8485e"/>
<circle cx="55.3" cy="7.7" r="0.6" fill="#fde0c0"/>
<circle cx="50.7" cy="7.0" r="2.3" fill="#ee5a6a"/>
<circle cx="56.6" cy="14.5" r="1.9" fill="#e8485e"/>
<circle cx="56.6" cy="14.5" r="0.6" fill="#fde0c0"/>
<circle cx="56.4" cy="17.9" r="2.0" fill="#ee5a6a"/>
<circle cx="56.4" cy="17.9" r="0.6" fill="#fde0c0"/>
<circle cx="52.9" cy="11.4" r="1.6" fill="#e8505e"/>
<circle cx="52.9" cy="11.4" r="0.6" fill="#fde0c0"/>
<circle cx="57.8" cy="11.7" r="1.8" fill="#ee5a6a"/>
<circle cx="57.8" cy="11.7" r="0.6" fill="#fde0c0"/>
<circle cx="53.1" cy="8.4" r="1.8" fill="#ee5a6a"/>
<circle cx="53.1" cy="8.4" r="0.6" fill="#fde0c0"/>
<circle cx="53.1" cy="9.9" r="2.5" fill="#f0707a"/>
<circle cx="61.9" cy="11.3" r="2.5" fill="#e8485e"/>
<circle cx="61.9" cy="11.3" r="0.6" fill="#fde0c0"/>
<circle cx="51.1" cy="7.8" r="2.5" fill="#ee5a6a"/>
<circle cx="51.1" cy="7.8" r="0.6" fill="#fde0c0"/>
<circle cx="57.9" cy="18.4" r="2.2" fill="#e8505e"/>
<circle cx="57.9" cy="16.3" r="1.9" fill="#e8505e"/>
<circle cx="50.9" cy="21.5" r="2.6" fill="#ee5a6a"/>
<circle cx="50.9" cy="21.5" r="0.6" fill="#fde0c0"/>
<circle cx="70.8" cy="11.5" r="2.6" fill="#e8485e"/>
<circle cx="68.3" cy="15.6" r="2.1" fill="#e8505e"/>
<circle cx="62.6" cy="10.0" r="2.5" fill="#e8485e"/>
<circle cx="63.1" cy="14.7" r="2.4" fill="#e8505e"/>
<circle cx="66.6" cy="20.5" r="1.8" fill="#f28a88"/>
<circle cx="66.6" cy="20.5" r="0.6" fill="#fde0c0"/>
<circle cx="70.7" cy="19.3" r="2.1" fill="#f28a88"/>
<circle cx="70.7" cy="19.3" r="0.6" fill="#fde0c0"/>
<circle cx="60.9" cy="18.3" r="1.7" fill="#f28a88"/>
<circle cx="67.3" cy="11.7" r="2.0" fill="#f28a88"/>
<circle cx="63.6" cy="14.2" r="1.7" fill="#f28a88"/>
<circle cx="63.6" cy="14.2" r="0.6" fill="#fde0c0"/>
<circle cx="62.5" cy="21.7" r="2.0" fill="#e8505e"/>
<circle cx="64.8" cy="10.9" r="2.5" fill="#f0707a"/>
<circle cx="65.2" cy="20.3" r="2.4" fill="#e8485e"/>
<circle cx="71.3" cy="17.6" r="2.5" fill="#e8505e"/>
<circle cx="71.3" cy="17.6" r="0.6" fill="#fde0c0"/>
<circle cx="69.6" cy="12.0" r="2.5" fill="#ee5a6a"/>
<circle cx="63.9" cy="20.3" r="1.9" fill="#e8485e"/>
<circle cx="60.1" cy="13.7" r="2.1" fill="#e8505e"/>
<circle cx="67.2" cy="16.3" r="2.1" fill="#e8505e"/>
<circle cx="64.3" cy="19.2" r="2.6" fill="#e8485e"/>
<circle cx="17.0" cy="1.3" r="1.9" fill="#e8505e"/>
<circle cx="16.1" cy="3.7" r="1.6" fill="#e8505e"/>
<circle cx="13.2" cy="0.6" r="1.8" fill="#f0707a"/>
<circle cx="10.8" cy="1.7" r="1.7" fill="#f28a88"/>
<circle cx="10.8" cy="1.7" r="0.6" fill="#fde0c0"/>
<circle cx="23.7" cy="1.5" r="1.7" fill="#f0707a"/>
<circle cx="23.3" cy="0.3" r="1.7" fill="#ee5a6a"/>
<circle cx="23.3" cy="0.3" r="0.6" fill="#fde0c0"/>
<circle cx="11.6" cy="0.7" r="1.9" fill="#f28a88"/>
<circle cx="11.6" cy="0.7" r="0.6" fill="#fde0c0"/>
<circle cx="24.8" cy="3.3" r="1.8" fill="#e8485e"/>
<circle cx="24.8" cy="3.3" r="0.6" fill="#fde0c0"/>
<circle cx="16.4" cy="2.0" r="1.7" fill="#e8485e"/>
<circle cx="25.3" cy="0.5" r="1.7" fill="#ee5a6a"/>
<circle cx="56.3" cy="1.5" r="2.5" fill="#e8505e"/>
<circle cx="50.4" cy="2.4" r="1.8" fill="#f0707a"/>
<circle cx="50.4" cy="2.4" r="0.6" fill="#fde0c0"/>
<circle cx="51.3" cy="3.1" r="2.6" fill="#e8505e"/>
<circle cx="57.7" cy="1.6" r="2.0" fill="#f28a88"/>
<circle cx="57.7" cy="1.6" r="0.6" fill="#fde0c0"/>
<circle cx="49.8" cy="2.7" r="2.3" fill="#f28a88"/>
<circle cx="52.0" cy="1.9" r="1.6" fill="#f28a88"/>
<circle cx="52.0" cy="1.9" r="0.6" fill="#fde0c0"/>
<circle cx="89.5" cy="9.9" r="2.5" fill="#f28a88"/>
<circle cx="88.4" cy="8.0" r="2.1" fill="#e8505e"/>
<circle cx="86.0" cy="3.2" r="1.8" fill="#f0707a"/>
<circle cx="86.0" cy="3.2" r="0.6" fill="#fde0c0"/>
<circle cx="72.8" cy="5.2" r="2.2" fill="#f28a88"/>
<circle cx="89.3" cy="4.1" r="2.1" fill="#ee5a6a"/>
<circle cx="75.7" cy="9.6" r="1.7" fill="#f0707a"/>
<circle cx="75.7" cy="9.6" r="0.6" fill="#fde0c0"/>
<circle cx="89.9" cy="4.3" r="2.5" fill="#ee5a6a"/>
<circle cx="83.8" cy="9.6" r="2.5" fill="#e8485e"/>
<circle cx="84.5" cy="7.8" r="2.2" fill="#f28a88"/>
<circle cx="84.5" cy="7.8" r="0.6" fill="#fde0c0"/>
<circle cx="75.9" cy="4.4" r="2.1" fill="#e8505e"/>
<circle cx="75.9" cy="4.4" r="0.6" fill="#fde0c0"/>
<circle cx="99.1" cy="9.1" r="2.0" fill="#f0707a"/>
<circle cx="95.3" cy="10.6" r="2.0" fill="#e8485e"/>
<circle cx="95.3" cy="10.6" r="0.6" fill="#fde0c0"/>
<circle cx="97.7" cy="9.6" r="2.4" fill="#e8485e"/>
<circle cx="97.7" cy="9.6" r="0.6" fill="#fde0c0"/>
<circle cx="98.9" cy="15.9" r="1.8" fill="#f28a88"/>
<circle cx="98.9" cy="15.9" r="0.6" fill="#fde0c0"/>
<circle cx="99.4" cy="12.4" r="2.5" fill="#e8505e"/>
<circle cx="97.9" cy="17.1" r="2.5" fill="#e8505e"/>
<circle cx="97.9" cy="17.1" r="0.6" fill="#fde0c0"/>
<circle cx="94.2" cy="12.4" r="1.8" fill="#e8505e"/>
<circle cx="99.4" cy="9.7" r="2.2" fill="#e8505e"/>
<circle cx="106.7" cy="5.4" r="1.9" fill="#f28a88"/>
<circle cx="106.7" cy="5.4" r="0.6" fill="#fde0c0"/>
<circle cx="122.1" cy="5.4" r="1.9" fill="#e8485e"/>
<circle cx="122.1" cy="7.2" r="2.3" fill="#e8485e"/>
<circle cx="115.5" cy="7.9" r="2.0" fill="#e8485e"/>
<circle cx="115.5" cy="7.9" r="0.6" fill="#fde0c0"/>
<circle cx="106.8" cy="4.6" r="2.4" fill="#ee5a6a"/>
<circle cx="106.8" cy="4.6" r="0.6" fill="#fde0c0"/>
<circle cx="118.2" cy="3.4" r="2.2" fill="#ee5a6a"/>
<circle cx="108.1" cy="7.8" r="2.4" fill="#f28a88"/>
<circle cx="107.3" cy="2.6" r="1.9" fill="#e8485e"/>
<circle cx="123.5" cy="1.1" r="2.3" fill="#ee5a6a"/>
<circle cx="123.5" cy="1.1" r="0.6" fill="#fde0c0"/>
<circle cx="122.0" cy="6.2" r="2.4" fill="#f0707a"/>
<circle cx="117.4" cy="3.8" r="1.8" fill="#e8505e"/>
<circle cx="119.6" cy="7.0" r="1.9" fill="#f0707a"/>
<circle cx="118.7" cy="4.1" r="1.8" fill="#e8485e"/>
<circle cx="118.7" cy="4.1" r="0.6" fill="#fde0c0"/>
<circle cx="113.9" cy="7.8" r="1.9" fill="#e8505e"/>
<circle cx="120.7" cy="14.9" r="2.4" fill="#ee5a6a"/>
<circle cx="120.7" cy="14.9" r="0.6" fill="#fde0c0"/>
<circle cx="113.2" cy="10.4" r="1.9" fill="#f0707a"/>
<circle cx="115.5" cy="17.4" r="1.9" fill="#ee5a6a"/>
<circle cx="116.6" cy="21.2" r="1.9" fill="#ee5a6a"/>
<circle cx="113.0" cy="11.4" r="1.9" fill="#e8505e"/>
<circle cx="107.7" cy="11.1" r="2.1" fill="#e8485e"/>
<circle cx="107.7" cy="11.1" r="0.6" fill="#fde0c0"/>
<circle cx="121.5" cy="13.6" r="2.2" fill="#ee5a6a"/>
<circle cx="105.4" cy="20.2" r="1.8" fill="#e8485e"/>
<circle cx="118.4" cy="18.1" r="1.9" fill="#f28a88"/>
<circle cx="118.4" cy="18.1" r="0.6" fill="#fde0c0"/>
<circle cx="109.9" cy="21.8" r="2.2" fill="#f0707a"/>
<circle cx="106.9" cy="19.1" r="1.6" fill="#e8485e"/>
<circle cx="116.3" cy="21.7" r="1.7" fill="#f0707a"/>
<circle cx="116.0" cy="20.1" r="1.7" fill="#ee5a6a"/>
<circle cx="111.1" cy="17.2" r="2.1" fill="#f0707a"/>
<circle cx="111.1" cy="17.2" r="0.6" fill="#fde0c0"/>
<circle cx="117.4" cy="20.1" r="2.4" fill="#e8485e"/>
<circle cx="117.4" cy="20.1" r="0.6" fill="#fde0c0"/>
<circle cx="110.4" cy="13.6" r="2.0" fill="#ee5a6a"/>
<circle cx="135.5" cy="12.6" r="2.1" fill="#e8485e"/>
<circle cx="128.7" cy="12.2" r="2.6" fill="#ee5a6a"/>
<circle cx="128.7" cy="12.2" r="0.6" fill="#fde0c0"/>
<circle cx="127.6" cy="11.6" r="2.3" fill="#f0707a"/>
<circle cx="133.0" cy="8.5" r="1.9" fill="#e8505e"/>
<circle cx="133.0" cy="8.5" r="0.6" fill="#fde0c0"/>
<circle cx="139.9" cy="15.4" r="2.0" fill="#e8485e"/>
<circle cx="139.9" cy="15.4" r="0.6" fill="#fde0c0"/>
<circle cx="127.9" cy="8.4" r="2.4" fill="#e8505e"/>
<circle cx="127.9" cy="8.4" r="0.6" fill="#fde0c0"/>
<circle cx="130.6" cy="15.2" r="1.7" fill="#e8485e"/>
<circle cx="130.6" cy="15.2" r="0.6" fill="#fde0c0"/>
<circle cx="139.6" cy="14.3" r="1.8" fill="#f28a88"/>
<circle cx="139.6" cy="14.3" r="0.6" fill="#fde0c0"/>
<circle cx="130.7" cy="8.2" r="2.3" fill="#e8505e"/>
<circle cx="130.7" cy="8.2" r="0.6" fill="#fde0c0"/>
<circle cx="137.2" cy="9.7" r="1.6" fill="#ee5a6a"/>
<circle cx="129.3" cy="16.9" r="2.1" fill="#f0707a"/>
<circle cx="129.3" cy="16.9" r="0.6" fill="#fde0c0"/>
<circle cx="130.8" cy="16.1" r="2.1" fill="#f28a88"/>
<circle cx="149.1" cy="8.7" r="2.1" fill="#f28a88"/>
<circle cx="149.1" cy="8.7" r="0.6" fill="#fde0c0"/>
<circle cx="152.8" cy="12.8" r="2.1" fill="#e8485e"/>
<circle cx="152.8" cy="12.8" r="0.6" fill="#fde0c0"/>
<circle cx="153.5" cy="7.6" r="1.8" fill="#f28a88"/>
<circle cx="153.2" cy="6.4" r="2.4" fill="#e8485e"/>
<circle cx="146.6" cy="12.7" r="1.7" fill="#ee5a6a"/>
<circle cx="146.6" cy="12.7" r="0.6" fill="#fde0c0"/>
<circle cx="146.7" cy="9.8" r="2.5" fill="#ee5a6a"/>
<circle cx="155.1" cy="10.2" r="2.4" fill="#e8485e"/>
<circle cx="149.5" cy="9.3" r="1.6" fill="#f28a88"/>
<circle cx="168.3" cy="15.6" r="1.8" fill="#e8485e"/>
<circle cx="165.8" cy="12.3" r="1.8" fill="#ee5a6a"/>
<circle cx="154.0" cy="21.2" r="2.5" fill="#e8485e"/>
<circle cx="154.0" cy="21.2" r="0.6" fill="#fde0c0"/>
<circle cx="150.1" cy="14.9" r="2.1" fill="#e8505e"/>
<circle cx="150.1" cy="14.9" r="0.6" fill="#fde0c0"/>
<circle cx="160.5" cy="15.4" r="1.8" fill="#ee5a6a"/>
<circle cx="161.0" cy="18.9" r="1.7" fill="#e8505e"/>
<circle cx="167.8" cy="21.6" r="2.1" fill="#f28a88"/>
<circle cx="167.8" cy="21.6" r="0.6" fill="#fde0c0"/>
<circle cx="155.5" cy="17.9" r="1.7" fill="#f28a88"/>
<circle cx="155.5" cy="17.9" r="0.6" fill="#fde0c0"/>
<circle cx="169.1" cy="13.6" r="2.4" fill="#f28a88"/>
<circle cx="165.5" cy="17.9" r="2.6" fill="#ee5a6a"/>
<circle cx="160.7" cy="14.5" r="2.2" fill="#ee5a6a"/>
<circle cx="170.0" cy="17.8" r="1.6" fill="#f28a88"/>
<circle cx="170.7" cy="11.7" r="2.3" fill="#f28a88"/>
<circle cx="174.3" cy="6.7" r="1.9" fill="#f0707a"/>
<circle cx="179.9" cy="9.6" r="2.1" fill="#f28a88"/>
<circle cx="179.9" cy="9.6" r="0.6" fill="#fde0c0"/>
<circle cx="173.2" cy="9.3" r="1.9" fill="#ee5a6a"/>
<circle cx="172.6" cy="10.7" r="1.8" fill="#e8485e"/>
<circle cx="172.3" cy="8.2" r="1.6" fill="#e8485e"/>
<circle cx="177.6" cy="5.4" r="2.5" fill="#f0707a"/>
<circle cx="173.5" cy="5.9" r="2.0" fill="#e8505e"/>
<circle cx="173.5" cy="5.9" r="0.6" fill="#fde0c0"/>
<circle cx="169.2" cy="10.3" r="1.7" fill="#e8485e"/>
<circle cx="169.2" cy="10.3" r="0.6" fill="#fde0c0"/>
<circle cx="173.5" cy="5.3" r="2.3" fill="#e8485e"/>
<circle cx="89.8" cy="16.7" r="1.9" fill="#ee5a6a"/>
<circle cx="89.8" cy="16.7" r="0.6" fill="#fde0c0"/>
<circle cx="84.9" cy="20.1" r="2.2" fill="#e8505e"/>
<circle cx="84.9" cy="20.1" r="0.6" fill="#fde0c0"/>
<circle cx="86.6" cy="18.4" r="1.7" fill="#ee5a6a"/>
<circle cx="86.6" cy="18.4" r="0.6" fill="#fde0c0"/>
<circle cx="85.1" cy="15.7" r="1.6" fill="#f0707a"/>
<circle cx="85.1" cy="15.7" r="0.6" fill="#fde0c0"/>
<circle cx="83.0" cy="17.5" r="1.9" fill="#e8505e"/>
<circle cx="83.0" cy="17.5" r="0.6" fill="#fde0c0"/>
<circle cx="87.4" cy="21.1" r="2.0" fill="#e8485e"/>
</g></svg></div><!--/pt3-->
<div class="sw" style="left:966px;top:469px;background:#3b5fd2"></div>
<div class="nm" style="left:966px;top:528px">sexy blue</div><div class="by" style="left:966px;top:542px;letter-spacing:-0.19px">by ArtByMulcare</div>
<div class="bub" style="left:1167px;top:531px"></div><div class="cm" style="left:1181px;top:528px">0</div>
<div class="sw" style="left:966px;top:565px;background:#946f5e"></div>
<div class="nm" style="left:966px;top:624px;letter-spacing:0.21px">Lucious Brown</div><div class="by" style="left:966px;top:638px;letter-spacing:-0.19px">by ArtByMulcare</div>
<div class="bub" style="left:1167px;top:627px"></div><div class="cm" style="left:1181px;top:624px">0</div>
<div class="sw" style="left:966px;top:661px;background:#11d3ee"></div>
</div>

<!-- scrollbar -->
<div class="abs" style="left:1349px;top:0;width:17px;height:682px;background:#f1f1f1"></div>
<div class="abs" style="left:1351px;top:113px;width:13px;height:109px;background:#c0c0c0"></div>
<div class="abs" style="left:1353px;top:8px;border:4px solid transparent;border-bottom:4px solid #505050;border-top:0"></div>
<div class="abs" style="left:1353px;top:671px;border:4px solid transparent;border-top:4px solid #505050;border-bottom:0"></div>
</body></html>
